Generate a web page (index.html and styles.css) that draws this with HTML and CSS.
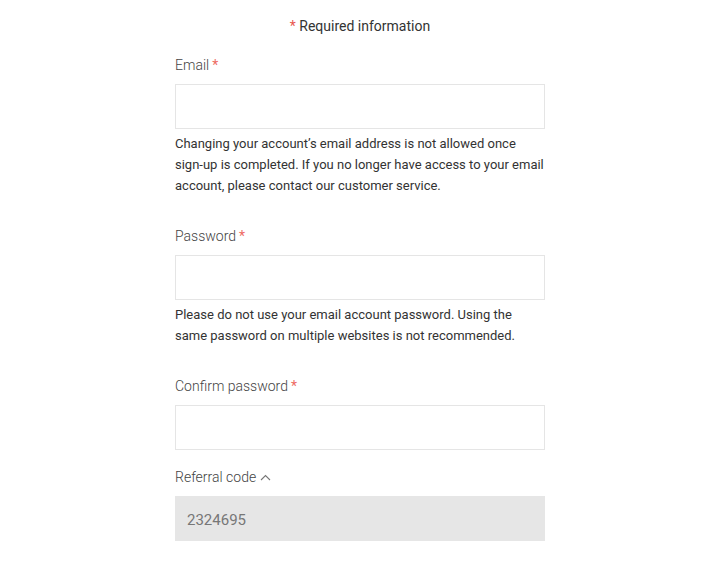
FILE: index.html
```html
<!DOCTYPE html>
<html lang="en">
<head>
<meta charset="utf-8">
<title>Sign up</title>
<link rel="stylesheet" href="styles.css">
</head>
<body>
<div class="page">
  <p class="required-note"><span class="star">*</span> Required information</p>
  <form class="form">
    <div class="field">
      <label class="label">Email <span class="star">*</span></label>
      <div class="input"></div>
      <p class="help">Changing your account’s email address is not allowed once sign-up is completed. If you no longer have access to your email account, please contact our customer service.</p>
    </div>
    <div class="field">
      <label class="label">Password <span class="star">*</span></label>
      <div class="input"></div>
      <p class="help">Please do not use your email account password. Using the same password on multiple websites is not recommended.</p>
    </div>
    <div class="field field-tight">
      <label class="label">Confirm password <span class="star">*</span></label>
      <div class="input"></div>
    </div>
    <div class="field">
      <label class="label">Referral code <svg class="chev" width="11" height="7" viewBox="0 0 11 7"><path d="M1 6 L5.5 1.5 L10 6" fill="none" stroke="#777" stroke-width="1.1"/></svg></label>
      <div class="input input-disabled">2324695</div>
    </div>
  </form>
</div>
</body>
</html>
```

FILE: styles.css
```css
html, body {
  margin: 0;
  padding: 0;
  background: #fff;
}
body {
  font-family: Roboto, "Liberation Sans", sans-serif;
  color: #333;
}
.page {
  width: 727px;
  padding-top: 16px;
}
.required-note {
  margin: 0;
  text-align: center;
  font-size: 14px;
  line-height: 20px;
  color: #333;
  padding-right: 7px;
}
.star {
  color: #e8574f;
}
.form {
  width: 370px;
  margin: 19px 0 0 175px;
}
.field {
  margin-bottom: 30px;
}
.field-tight {
  margin-bottom: 17px;
}
.label {
  display: flex;
  align-items: center;
  gap: 3px;
  font-size: 14px;
  font-weight: 300;
  line-height: 20px;
  color: #444;
  margin-bottom: 9px;
}
.label .star {
  font-weight: 400;
  color: #ee6b63;
}
.chev {
  margin-left: 1px;
  margin-top: 1px;
}
.input {
  box-sizing: border-box;
  height: 45px;
  border: 1px solid #e5e5e5;
  background: #fff;
}
.input-disabled {
  border-color: #e6e6e6;
  background: #e6e6e6;
  color: #777;
  font-size: 15px;
  line-height: 43px;
  padding: 2px 0 0 11px;
}
.help {
  margin: 4px 0 0;
  font-size: 13px;
  line-height: 21px;
  color: #333;
}
```
